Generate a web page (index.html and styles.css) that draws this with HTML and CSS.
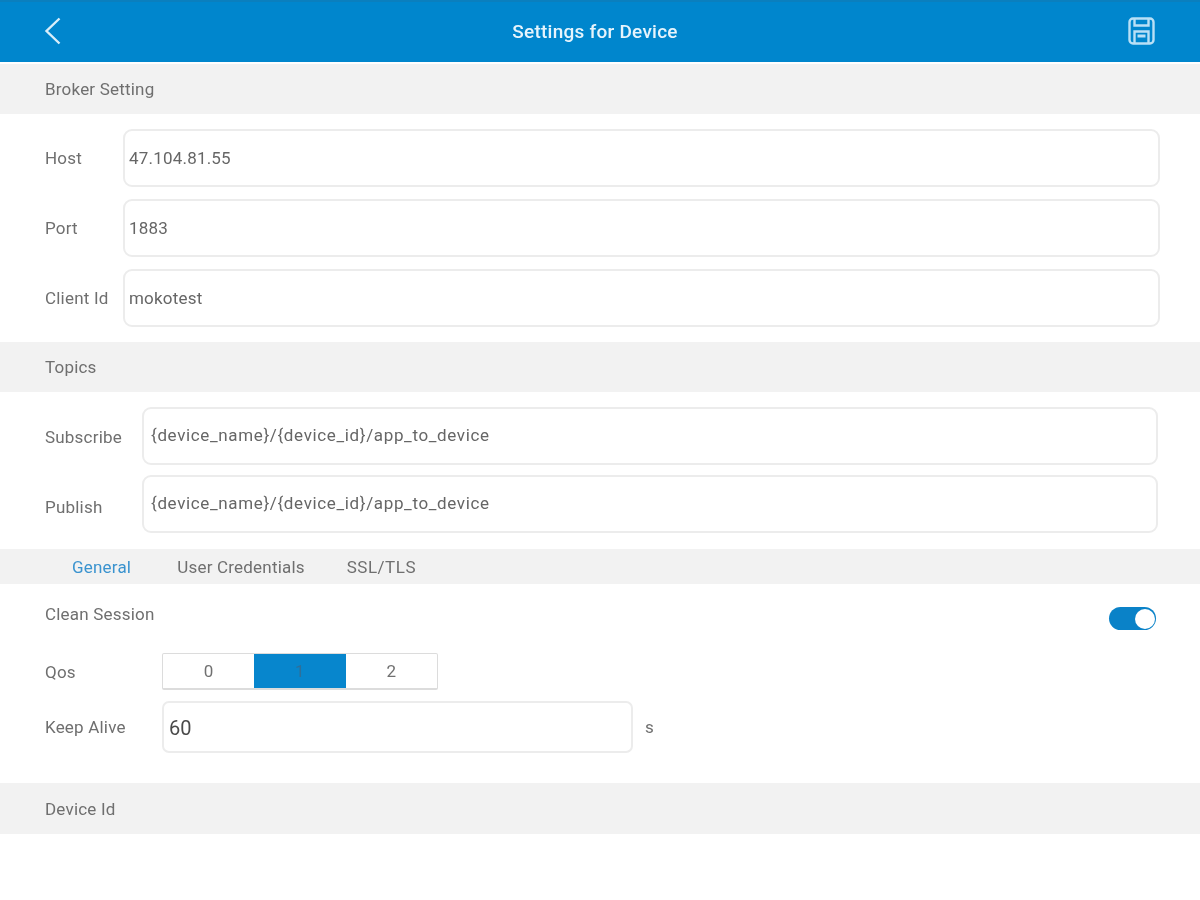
FILE: index.html
```html
<!DOCTYPE html>
<html lang="en">
<head>
<meta charset="utf-8">
<title>Settings for Device</title>
<link rel="stylesheet" href="styles.css">
</head>
<body>
<header class="topbar">
  <svg class="back" width="18" height="30" viewBox="0 0 18 30"><path d="M15.5 2.5 L2.5 15 L15.5 27.5" fill="none" stroke="#d8eefa" stroke-width="2.4"/></svg>
  <h1 class="title">Settings for Device</h1>
  <svg class="save" width="27" height="28" viewBox="0 0 27 28" fill="none" stroke="#b9e0f6" stroke-width="2.4"><rect x="1.5" y="1.5" width="24" height="25" rx="3.5"/><path d="M6.5 2 V8.5 H20.5 V2"/><path d="M6.5 26 V14.5 H20.5 V26"/><path d="M9.5 19 H17.5" stroke-width="3"/></svg>
</header>

<section class="band">Broker Setting</section>
<div class="fields broker">
  <div class="row"><label class="lab">Host</label><div class="box">47.104.81.55</div></div>
  <div class="row"><label class="lab">Port</label><div class="box">1883</div></div>
  <div class="row"><label class="lab">Client Id</label><div class="box">mokotest</div></div>
</div>

<section class="band">Topics</section>
<div class="fields topics">
  <div class="row"><label class="lab">Subscribe</label><div class="box">{device_name}/{device_id}/app_to_device</div></div>
  <div class="row"><label class="lab">Publish</label><div class="box">{device_name}/{device_id}/app_to_device</div></div>
</div>

<nav class="tabs">
  <span class="tab active">General</span>
  <span class="tab">User Credentials</span>
  <span class="tab">SSL/TLS</span>
</nav>

<div class="general">
  <div class="clean">
    <span class="lab">Clean Session</span>
    <span class="switch"><span class="knob"></span></span>
  </div>
  <div class="qos">
    <span class="lab">Qos</span>
    <div class="seg">
      <span class="opt">0</span>
      <span class="opt on">1</span>
      <span class="opt">2</span>
    </div>
  </div>
  <div class="keep">
    <span class="lab">Keep Alive</span>
    <div class="keepbox">60</div>
    <span class="unit">s</span>
  </div>
</div>

<section class="band last">Device Id</section>
</body>
</html>
```
FILE: styles.css
```css
* { box-sizing: border-box; }
html, body { margin: 0; padding: 0; background: #fff; }
body {
  width: 1200px;
  height: 900px;
  overflow: hidden;
  font-family: Roboto, "Liberation Sans", sans-serif;
  font-size: 17px;
  letter-spacing: 0.2px;
  color: #6f6f6f;
  filter: blur(0.45px);
}
.topbar {
  height: 62px;
  background: #0086cd;
  border-top: 2px solid #0a7fbe;
  margin-bottom: 2px;
  display: flex;
  align-items: center;
  padding: 0 44px;
}
.back { flex: none; margin-top: -2px; }
.title {
  flex: 1;
  margin: -2px 0 0 0;
  text-align: center;
  font-size: 19px;
  font-weight: 500;
  letter-spacing: 0.25px;
  color: #e6f4fc;
}
.save { flex: none; margin-top: -2px; margin-right: 1px; }
.band {
  height: 50px;
  background: #f2f2f2;
  padding-left: 45px;
  display: flex;
  align-items: center;
}
.band.last { height: 51px; }
.fields { display: flex; flex-direction: column; gap: 12px; }
.broker { padding: 15px 40px 15px 45px; }
.topics { padding: 15px 42px 16px 45px; gap: 10px; }
.row { display: flex; align-items: center; height: 58px; }
.broker .lab { width: 78px; flex: none; }
.topics .lab { width: 97px; flex: none; }
.topics .row:nth-child(1) .lab { margin-top: 2px; }
.topics .row:nth-child(2) .lab { margin-top: 6px; }
.box {
  flex: 1;
  height: 58px;
  border: 2px solid #ececec;
  border-radius: 9px;
  display: flex;
  align-items: center;
  padding-left: 4px;
  color: #666;
}
.topics .box {
  padding-left: 7px;
  padding-bottom: 2px;
  margin-top: -1px;
  letter-spacing: 0.64px;
}
.tabs {
  height: 35px;
  background: #f2f2f2;
  display: flex;
  align-items: center;
  gap: 46px;
  padding-left: 72px;
}
.tab.active { color: #3a93cf; }
.tab:nth-child(3) { margin-left: -4px; letter-spacing: 0.5px; }
.general { height: 199px; padding: 0 44px 0 45px; }
.clean {
  height: 68px;
  display: flex;
  justify-content: space-between;
  padding-top: 20px;
}
.switch {
  width: 47px;
  height: 23px;
  margin-top: 3px;
  border-radius: 12px;
  background: #0a82c8;
  display: flex;
  justify-content: flex-end;
  align-items: center;
  padding-right: 1px;
}
.knob { width: 20px; height: 20px; border-radius: 50%; background: #fff; }
.qos { display: flex; align-items: center; height: 37px; margin-top: 1px; }
.qos .lab { width: 117px; flex: none; }
.seg {
  display: flex;
  width: 276px;
  height: 37px;
  border: 1px solid #dcdcdc;
  border-bottom-width: 2px;
  border-radius: 2px;
}
.opt { flex: 1; display: flex; align-items: center; justify-content: center; color: #707070; }
.opt.on { background: #0786cd; color: #2f6f99; }
.keep { display: flex; align-items: center; height: 52px; margin-top: 11px; }
.keep .lab { width: 117px; flex: none; }
.keepbox {
  width: 471px;
  height: 52px;
  border: 2px solid #ececec;
  border-radius: 7px;
  display: flex;
  align-items: center;
  padding-left: 5px;
  padding-top: 2px;
  font-size: 20px;
  letter-spacing: 0;
  color: #4a4a4a;
}
.unit { margin-left: 12px; }
```
